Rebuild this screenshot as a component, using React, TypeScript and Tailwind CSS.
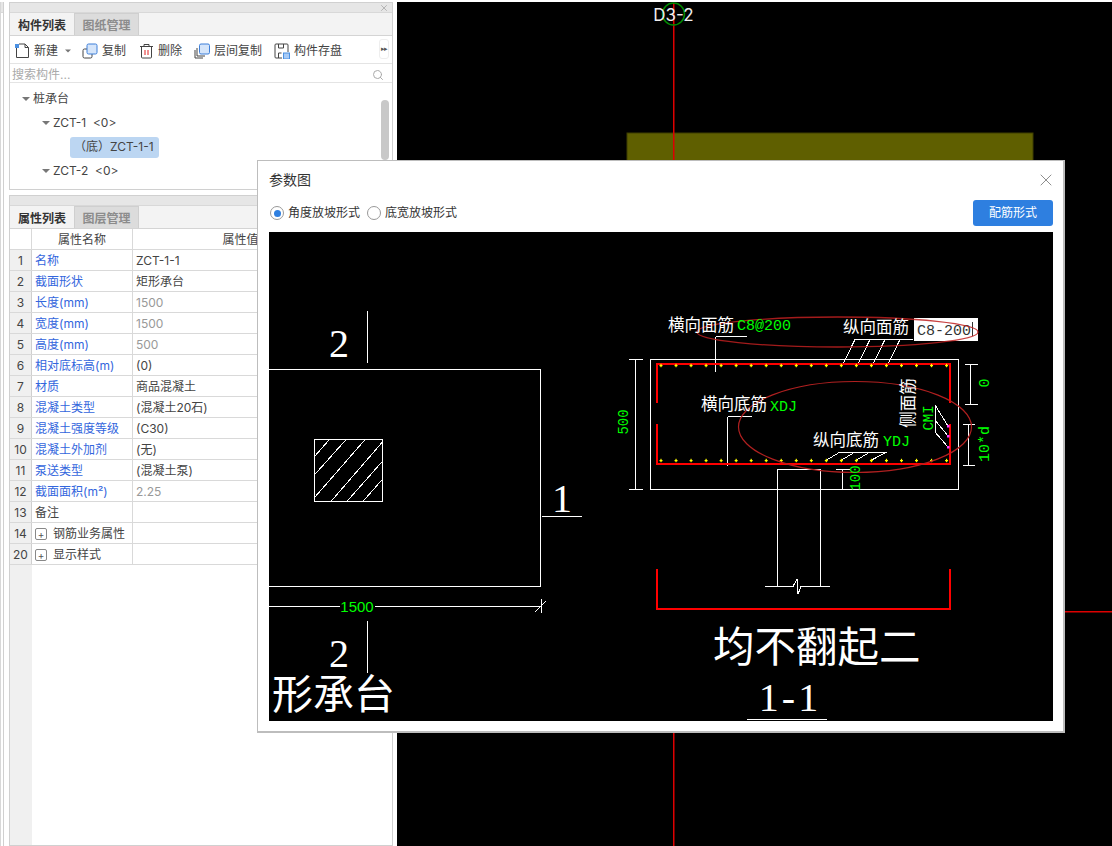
import { Search, X } from "lucide-react";
import React from "react";

type PropRow = { no: number; name: string; value?: string; tone?: "link" | "plain" | "group"; muted?: boolean };

const propRows: PropRow[] = [
  { no: 1, name: "名称", value: "ZCT-1-1" },
  { no: 2, name: "截面形状", value: "矩形承台" },
  { no: 3, name: "长度(mm)", value: "1500", muted: true },
  { no: 4, name: "宽度(mm)", value: "1500", muted: true },
  { no: 5, name: "高度(mm)", value: "500", muted: true },
  { no: 6, name: "相对底标高(m)", value: "(0)" },
  { no: 7, name: "材质", value: "商品混凝土" },
  { no: 8, name: "混凝土类型", value: "(混凝土20石)" },
  { no: 9, name: "混凝土强度等级", value: "(C30)" },
  { no: 10, name: "混凝土外加剂", value: "(无)" },
  { no: 11, name: "泵送类型", value: "(混凝土泵)" },
  { no: 12, name: "截面面积(m²)", value: "2.25", muted: true },
  { no: 13, name: "备注", tone: "plain" },
  { no: 14, name: "钢筋业务属性", tone: "group" },
  { no: 20, name: "显示样式", tone: "group" },
];

const SANS = "'Inter','Noto Sans CJK SC',sans-serif";
const SERIF = "'Liberation Serif','Noto Sans CJK SC',serif";
const MONO = "'Liberation Mono','DejaVu Sans Mono',monospace";
const GREEN = "#00ff00";

function NewIcon() {
  return (
    <svg width="16" height="16" viewBox="0 0 16 16" fill="none">
      <path d="M2.5 4v10.5h12v-10l-3.5-3.5H5" stroke="#444" strokeWidth="1" />
      <path d="M11 1v3.5h3.5" stroke="#444" strokeWidth="1" />
      <rect x="1" y="1" width="4" height="4" fill="#4a90e2" />
    </svg>
  );
}

function CopyIcon() {
  return (
    <svg width="16" height="16" viewBox="0 0 16 16" fill="none">
      <rect x="1" y="6" width="9" height="9" rx="1.5" stroke="#444" />
      <rect x="5" y="1" width="10" height="10" rx="1.5" fill="#d5e5fa" stroke="#3d7fd9" />
    </svg>
  );
}

function TrashIcon() {
  return (
    <svg width="15" height="16" viewBox="0 0 15 16" fill="none">
      <path d="M1 3.5h13M5 3.5V1.5h5v2M2.5 3.5v10.5a1 1 0 0 0 1 1h8a1 1 0 0 0 1-1V3.5" stroke="#444" />
      <path d="M6 7v5M9 7v5" stroke="#e02020" />
    </svg>
  );
}

function FloorCopyIcon() {
  return (
    <svg width="16" height="16" viewBox="0 0 16 16" fill="none">
      <path d="M1 7v8h8" stroke="#444" />
      <path d="M3 5v8h8" stroke="#444" />
      <rect x="5.5" y="1" width="10" height="10" rx="1.5" fill="#d5e5fa" stroke="#3d7fd9" />
    </svg>
  );
}

function SaveIcon() {
  return (
    <svg width="16" height="16" viewBox="0 0 16 16" fill="none">
      <path d="M8 15H2a1 1 0 0 1-1-1V2a1 1 0 0 1 1-1h11a1 1 0 0 1 1 1v7" stroke="#444" />
      <path d="M4.5 1v4h5V1M4.5 15v-5h3" stroke="#444" />
      <rect x="9.5" y="10" width="6" height="6" fill="#a9cbf5" stroke="#4a90e2" />
    </svg>
  );
}

function ToolButton({ icon, label, className }: { icon: React.ReactNode; label: string; className?: string }) {
  return (
    <div className={`flex items-center gap-[4px] ${className ?? ""}`}>
      {icon}
      <span className="whitespace-nowrap">{label}</span>
    </div>
  );
}

function Caret({ className }: { className?: string }) {
  return <div className={`w-0 h-0 border-x-[4px] border-x-transparent border-t-[4px] border-t-[#777] ${className ?? ""}`} />;
}

function TreeRow({ indent, label }: { indent: string; label: string }) {
  return (
    <div className={`h-6 flex items-center gap-[3px] ${indent}`}>
      <Caret />
      <span className="whitespace-pre">{label}</span>
    </div>
  );
}

function PanelTabs({ active, other }: { active: string; other: string }) {
  return (
    <div className="flex h-[23px] bg-[#f3f3f3] border-b border-[#d4d4d4] text-[12px] font-bold">
      <div className="w-[64px] pt-[3px] flex items-center justify-center text-[#333] bg-[#f3f3f3]">{active}</div>
      <div className="w-[65px] pt-[3px] flex items-center justify-center text-[#8c8c8c] bg-[#dcdcdc] border border-b-0 border-[#cfcfcf]">{other}</div>
    </div>
  );
}

function ComponentPanel() {
  return (
    <section className="h-[188px] border border-[#d0d0d0] bg-white flex flex-col shrink-0">
      <div className="h-[10px] bg-[#e6e6e6] border-b border-[#d8d8d8] flex items-center justify-end pr-[3px]">
        <X size={10} strokeWidth={2} className="text-[#aaa]" />
      </div>
      <PanelTabs active="构件列表" other="图纸管理" />
      <div className="h-[28px] flex items-center pl-[4px] pt-[2px] border-b border-[#e4e4e4] text-[#444] relative">
        <ToolButton icon={<NewIcon />} label="新建" className="gap-[3px]" />
        <Caret className="ml-[6px] scale-75" />
        <ToolButton icon={<CopyIcon />} label="复制" className="ml-[10px]" />
        <ToolButton icon={<TrashIcon />} label="删除" className="ml-[13px]" />
        <ToolButton icon={<FloorCopyIcon />} label="层间复制" className="ml-[12px]" />
        <ToolButton icon={<SaveIcon />} label="构件存盘" className="ml-[12px]" />
        <div className="absolute right-[3px] top-[3px] w-[10px] h-[20px] border border-[#eeeeee] rounded-[3px] flex items-center justify-center text-[7px] text-[#555] tracking-[-1px]">▸▸</div>
      </div>
      <div className="h-[19px] flex items-center justify-between pl-[2px] pr-[8px] pt-[3px] border-b border-[#e4e4e4] text-[#aaaaaa]">
        <span>搜索构件...</span>
        <Search size={12} className="text-[#aaa]" />
      </div>
      <div className="relative flex-1 pt-[4px] text-[#444]">
        <TreeRow indent="pl-[12px]" label="桩承台" />
        <TreeRow indent="pl-[32px]" label="ZCT-1  <0>" />
        <div className="h-6 flex items-center pl-[60px]">
          <div className="h-[21px] w-[89px] bg-[#bcd6f2] rounded-[3px] flex items-center pl-[4px] whitespace-nowrap">（底）ZCT-1-1</div>
        </div>
        <TreeRow indent="pl-[32px]" label="ZCT-2  <0>" />
        <div className="absolute left-[371px] top-[17px] w-[8px] h-[60px] rounded-full bg-[#c8c8c8]" />
      </div>
    </section>
  );
}

function PropCell({ row }: { row: PropRow }) {
  if (row.tone === "group") {
    return (
      <div className="flex items-center gap-[6px] pl-[3px] text-[#444]">
        <div className="w-[12px] h-[12px] border border-[#888] rounded-[2px] flex items-center justify-center text-[10px] leading-none text-[#555]">+</div>
        <span>{row.name}</span>
      </div>
    );
  }
  return <div className={`pl-[3px] ${row.tone === "plain" ? "text-[#444]" : "text-[#3366dd]"}`}>{row.name}</div>;
}

function PropertyPanel() {
  return (
    <section className="flex-1 border border-[#d0d0d0] bg-white flex flex-col min-h-0">
      <div className="h-[10px] bg-[#e6e6e6] border-b border-[#d8d8d8]" />
      <PanelTabs active="属性列表" other="图层管理" />
      <div className="flex-1 flex min-h-0 relative">
        <div className="absolute left-0 top-[21px] bottom-0 w-[22px] bg-[#f0f0f0]" />
        <div className="relative w-full">
          <div className="grid grid-cols-[22px_101px_1fr] h-[21px] border-b border-[#d9d9d9] items-center text-[#444]">
            <div className="h-full border-r border-[#d9d9d9]" />
            <div className="h-full pt-[2px] border-r border-[#d9d9d9] flex items-center justify-center">属性名称</div>
            <div className="text-center pt-[2px] pr-[44px]">属性值</div>
          </div>
          {propRows.map((row) => (
            <div key={row.no} className="grid grid-cols-[22px_101px_1fr] h-[21px] border-b border-[#d9d9d9] items-center">
              <div className="h-full pt-[2px] bg-[#f0f0f0] border-r border-[#cfcfcf] flex items-center justify-center text-[#444]">{row.no}</div>
              <div className="h-full pt-[2px] border-r border-[#d9d9d9] flex items-center">
                <PropCell row={row} />
              </div>
              <div className={`pl-[3px] pt-[2px] ${row.muted ? "text-[#999]" : "text-[#444]"}`}>{row.value}</div>
            </div>
          ))}
        </div>
      </div>
    </section>
  );
}

function Canvas() {
  return (
    <svg viewBox="397 0 715 846" className="w-full h-full block">
      <rect x="397" y="0" width="715" height="846" fill="#000" />
      <rect x="397" y="0" width="715" height="2" fill="#fff" />
      <rect x="627" y="133" width="406" height="40" fill="#5f5f00" stroke="#3e3e00" />
      <rect x="673" y="3" width="1.5" height="843" fill="#dd0000" />
      <rect x="1065" y="611" width="47" height="1.5" fill="#dd0000" />
      <circle cx="673.5" cy="14" r="11" fill="none" stroke="#008c00" strokeWidth="1.5" />
      <text x="673.5" y="21" textAnchor="middle" fill="#eee" fontSize="17" fontFamily={SANS}>D3-2</text>
    </svg>
  );
}

function Label({ x, y, size, children, fill = "#fff", font = SANS, anchor, spacing }: { x: number; y: number; size: number; children: React.ReactNode; fill?: string; font?: string; anchor?: "middle"; spacing?: number }) {
  return <text x={x} y={y} fontSize={size} fill={fill} fontFamily={font} textAnchor={anchor} letterSpacing={spacing}>{children}</text>;
}

function Rotated({ x, y, size, children, fill = GREEN, font = MONO }: { x: number; y: number; size: number; children: React.ReactNode; fill?: string; font?: string }) {
  return (
    <text transform={`translate(${x} ${y}) rotate(-90)`} textAnchor="middle" fontSize={size} fill={fill} fontFamily={font}>{children}</text>
  );
}

const rebarTicks = Array.from({ length: 20 }, (_, i) => 661 + i * 15.03);

function Drawing() {
  return (
    <svg viewBox="269 232 784 489" className="w-[784px] h-[489px] block bg-black">
      {/* plan view */}
      <g stroke="#fff" fill="none" shapeRendering="crispEdges">
        <path d="M269 369.5H540.5V586.5H269" />
        <rect x="314.5" y="439.5" width="68" height="62" />
        <path d="M329 440L315 456M345.7 440L315 474.3M364.7 440L315 497M382.7 441.7L331.3 501M382.7 461L347.3 501M382.7 479L363.3 501" />
        <path d="M367.5 311V363M367.5 621V673M542 516.5H582" />
        <path d="M269 606.5H340M375 606.5H541M541.5 599V613M535 612L546 601" />
      </g>
      <Label x={339} y={357} size={40} font={SERIF} anchor="middle">2</Label>
      <Label x={339} y={667} size={40} font={SERIF} anchor="middle">2</Label>
      <Label x={562} y={512} size={40} font={SERIF} anchor="middle">1</Label>
      <Label x={357} y={612} size={15} fill={GREEN} anchor="middle" font="'Liberation Sans',sans-serif">1500</Label>
      <Label x={272} y={709} size={41} font={SERIF}>形承台</Label>

      {/* section 1-1 */}
      <g stroke="#fff" fill="none" shapeRendering="crispEdges">
        <rect x="650.5" y="359.5" width="308" height="130" />
        <path d="M777.5 489V469.5H820.5V586.5M777.5 489V586.5M765 586.5H793L797 579L798 594L801 586.5H830" />
        <path d="M715.5 336.5H747M715.5 336.5V372M727.5 416.5H752M727.5 416.5V466" />
        <path d="M843 364L855 339.5H913M858 364L870 339.5M873 364L885 339.5M888 364L900 339.5" />
        <path d="M826.7 460L840 452H886.7M841.7 460L855 452M856.7 460L870 452M871.7 460L886.7 452" />
        <path d="M935 405V432M935 405L948 426M935 420L948 436M935 432L948 447" />
        <path d="M635.5 359V489M629 359.5H643M629 489.5H643" />
        <path d="M970.5 364V404M965 364.5H978M965 404.5H978M968.5 424V465M963 424.5H975M963 465.5H975" />
        <path d="M842.5 469V489M836 469.5H850" />
        <path d="M747 719.5H827" />
      </g>
      <g stroke="#ff0000" strokeWidth="2.4" fill="none" shapeRendering="crispEdges">
        <path d="M656.7 403V364H950V403M656.7 424V464H950V424" />
        <path d="M656.7 569V608.7H950V569" />
      </g>
      {rebarTicks.map((x) => (
        <g key={x} fill="#ffff00">
          <rect x={x - 1.5} y={365} width={3} height={1.2} />
          <rect x={x - 0.6} y={363.8} width={1.2} height={3.4} />
          <rect x={x - 1.5} y={460} width={3} height={1.2} />
          <rect x={x - 0.6} y={458.8} width={1.2} height={3.4} />
        </g>
      ))}
      <g fill="#ff40ff">
        <rect x="947" y="425" width="2.5" height="2.5" />
        <rect x="947" y="435" width="2.5" height="2.5" />
        <rect x="947" y="446" width="2.5" height="2.5" />
      </g>

      <rect x="914" y="318" width="64" height="23" fill="#fff" />
      <Label x={917} y={335} size={15} fill="#333" font={MONO}>C8-200</Label>
      <path d="M972.5 322V336" stroke="#333" shapeRendering="crispEdges" />

      <ellipse cx="837.5" cy="332" rx="140.5" ry="15" fill="none" stroke="#c02020" strokeWidth="1.3" opacity="0.85" />
      <ellipse cx="855" cy="427" rx="116.5" ry="45.5" fill="none" stroke="#b02020" strokeWidth="1.2" />

      <Label x={668} y={331} size={16.5}>横向面筋</Label>
      <Label x={737} y={330} size={15} fill={GREEN} font={MONO}>C8@200</Label>
      <Label x={843} y={333} size={16.5}>纵向面筋</Label>
      <Label x={701} y={410} size={16.5}>横向底筋</Label>
      <Label x={770} y={411} size={15} fill={GREEN} font={MONO}>XDJ</Label>
      <Label x={813} y={446} size={16.5}>纵向底筋</Label>
      <Label x={883} y={446} size={15} fill={GREEN} font={MONO}>YDJ</Label>
      <Rotated x={914} y={403} size={16.5} fill="#fff" font={SANS}>侧面筋</Rotated>
      <Rotated x={933} y={418} size={14}>CMI</Rotated>
      <Rotated x={628} y={422} size={14}>500</Rotated>
      <Rotated x={989} y={383} size={15}>0</Rotated>
      <Rotated x={989} y={444} size={15}>10*d</Rotated>
      <Rotated x={860} y={478} size={14}>100</Rotated>

      <Label x={713} y={662} size={41.5} font={SERIF}>均不翻起二</Label>
      <Label x={790} y={711} size={40} font={SERIF} anchor="middle" spacing={3}>1-1</Label>
    </svg>
  );
}

function Radio({ label, checked }: { label: string; checked?: boolean }) {
  return (
    <label className="flex items-center gap-[4px] text-[#333]">
      <span className="w-[14px] h-[14px] rounded-full border border-[#999] bg-white flex items-center justify-center">
        {checked ? <span className="w-[7px] h-[7px] rounded-full bg-[#2e7fe0]" /> : null}
      </span>
      {label}
    </label>
  );
}

function ParamDialog() {
  return (
    <div className="absolute left-[257px] top-[160px] w-[808px] h-[573px] bg-white border border-[#bdbdbd] border-r-2 border-b-2 flex flex-col">
      <div className="h-[39px] flex items-center justify-between pl-[11px] pr-[7px] pb-[2px] text-[#333]">
        <span className="text-[14px]">参数图</span>
        <X size={20} strokeWidth={1} className="text-[#777]" />
      </div>
      <div className="h-[26px] flex items-center gap-[7px] pl-[12px] pr-[10px]">
        <Radio label="角度放坡形式" checked />
        <Radio label="底宽放坡形式" />
        <button className="ml-auto w-[80px] h-[26px] rounded-[3px] bg-[#2e7fe0] text-white text-[12px]">配筋形式</button>
      </div>
      <div className="pt-[6px] pl-[11px]">
        <Drawing />
      </div>
    </div>
  );
}

export default function App() {
  return (
    <div className="relative w-[1112px] h-[846px] flex overflow-hidden bg-white text-[12px] font-['Inter','Noto_Sans_CJK_SC',sans-serif]">
      <aside className="w-[397px] shrink-0 flex pt-[2px] bg-white">
        <div className="w-[9px] flex shrink-0">
          <div className="w-[1px] bg-[#d8d8d8]" />
          <div className="w-[3px] border-r border-[#d0d0d0]">
            <div className="h-[11px] bg-[#e6e6e6] border-b border-[#d8d8d8]" />
          </div>
        </div>
        <div className="w-[384px] flex flex-col gap-[5px]">
          <ComponentPanel />
          <PropertyPanel />
        </div>
      </aside>
      <main className="flex-1 min-w-0">
        <Canvas />
      </main>
      <ParamDialog />
    </div>
  );
}
